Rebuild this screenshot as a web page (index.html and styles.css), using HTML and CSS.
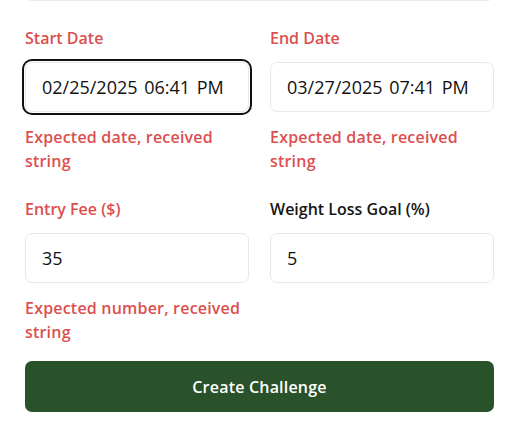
FILE: index.html
```html
<!DOCTYPE html>
<html lang="en">
<head>
<meta charset="utf-8">
<title>Create Challenge</title>
<link rel="stylesheet" href="styles.css">
</head>
<body>
<main class="form">
  <div class="field field-prev">
    <input class="input" type="text" aria-label="Previous field">
  </div>

  <div class="row">
    <div class="field">
      <label class="label label-error" for="start">Start Date</label>
      <input class="input input-date is-focused" id="start" type="text" value="02/25/2025 06:41 PM">
      <p class="error">Expected date, received string</p>
    </div>
    <div class="field">
      <label class="label label-error" for="end">End Date</label>
      <input class="input input-date" id="end" type="text" value="03/27/2025 07:41 PM">
      <p class="error">Expected date, received string</p>
    </div>
  </div>

  <div class="row">
    <div class="field">
      <label class="label label-error" for="fee">Entry Fee ($)</label>
      <input class="input" id="fee" type="text" value="35">
      <p class="error">Expected number, received string</p>
    </div>
    <div class="field">
      <label class="label" for="goal">Weight Loss Goal (%)</label>
      <input class="input" id="goal" type="text" value="5">
    </div>
  </div>

  <button class="submit" type="button">Create Challenge</button>
</main>
</body>
</html>
```

FILE: styles.css
```css
* {
  box-sizing: border-box;
}

html, body {
  margin: 0;
  padding: 0;
  background: #ffffff;
}

body {
  font-family: "Open Sans", "Noto Sans", "Liberation Sans", sans-serif;
  font-size: 16px;
  line-height: 24px;
  color: #111111;
  overflow: hidden;
}

.form {
  display: flex;
  flex-direction: column;
  padding: 0 16px 0 25px;
}

.field-prev {
  margin-top: -49px;
  margin-bottom: 25px;
}

.row {
  display: grid;
  grid-template-columns: 1fr 1fr;
  column-gap: 21px;
  margin-bottom: 24px;
}

.row:last-of-type {
  margin-bottom: 17px;
}

.field {
  display: flex;
  flex-direction: column;
  min-width: 0;
}

.label {
  display: block;
  font-size: 16px;
  line-height: 24px;
  font-weight: 600;
  color: #161616;
  margin-bottom: 12px;
}

.label-error {
  color: #dc4f4f;
}

.input {
  display: block;
  width: 100%;
  height: 50px;
  padding: 0 16px;
  border: 1px solid #ede7e9;
  border-radius: 7px;
  background: #ffffff;
  font-family: inherit;
  font-size: 18px;
  color: #111111;
  outline: none;
}

.input-date {
  word-spacing: 2px;
}

.is-focused {
  box-shadow: 0 0 0 1px #ffffff, 0 0 0 3px #101010;
}

.error {
  margin: 13px 0 0;
  font-size: 16px;
  line-height: 24px;
  font-weight: 600;
  color: #dc4f4f;
  letter-spacing: 0.2px;
}

.submit {
  display: block;
  width: 100%;
  height: 51px;
  border: none;
  border-radius: 7px;
  background: #29512a;
  color: #ffffff;
  font-family: inherit;
  font-size: 16px;
  font-weight: 600;
  letter-spacing: 0.2px;
  cursor: pointer;
}
```
